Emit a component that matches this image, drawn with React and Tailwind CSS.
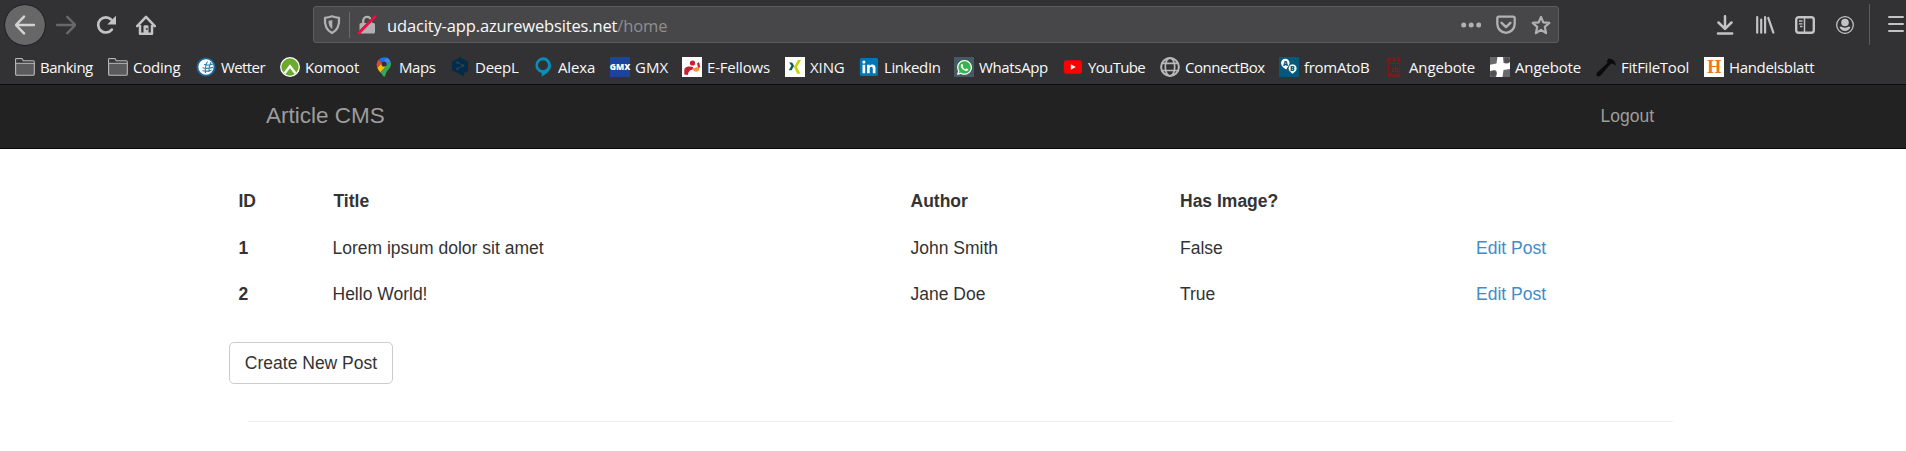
import { FaWhatsapp } from "react-icons/fa";

const Icon = ({ children, className = "h-5 w-5 shrink-0" }) => (
  <svg viewBox="0 0 20 20" className={className} fill="none">
    {children}
  </svg>
);

const Folder = () => (
  <Icon>
    <path d="M.6 17V2.3q0-.7.7-.7h5.3q.6 0 .9.7l.8 1.600h10q1 0 1 1V17q0 1.300-1.300 1.300H2Q.6 18.300.6 17z" fill="#5b5b5d" stroke="#b9b9ba" strokeWidth="1.100" />
    <path d="M1.200 2.200h5.300l1.200 2.300h11v1.500H1.200z" fill="#38383a" />
    <path d="M.6 6.300h18.800" stroke="#b9b9ba" strokeWidth="1" />
  </Icon>
);

const Wetter = () => (
  <Icon>
    <circle cx="10" cy="10" r="8.600" fill="#fff" stroke="#176a96" strokeWidth="1.900" />
    <path d="M8 7.500c3 .8 6 .6 9-.6M6.500 10.800c3 .8 7 .6 10.500-.4M6.500 13.800c3 .6 6 .4 9-.6M11.500 4.500c-2 3-2.500 7-2 11.500M15 5c-1.600 3-2.200 6.500-2 10" stroke="#2b7eac" strokeWidth="1.100" />
  </Icon>
);

const Komoot = () => (
  <Icon>
    <circle cx="10" cy="10" r="9.300" fill="#6aab2b" stroke="#fff" strokeWidth="1.300" />
    <path d="m4.600 16.200 5.400-6.900 5.400 6.900" stroke="#fff" strokeWidth="2.400" />
  </Icon>
);

const Maps = () => (
  <Icon>
    <path d="M4.500 2.800 8 5.700 3.400 11Q1.500 6.500 4.500 2.800z" fill="#ea4335" />
    <path d="M4.500 2.800Q7.500-.6 12.300.5L8 5.700z" fill="#1a73e8" />
    <path d="M12.300.5q3 .8 4.200 3.800L12.400 9 8 5.700z" fill="#4285f4" />
    <path d="M3.400 11 8 5.700l4.400 3.200L6.300 15.600Q4.400 13.300 3.400 11z" fill="#fbbc04" />
    <path d="M16.500 4.300c1.800 4.700-1.600 7.700-3.600 10.300-1.400 1.900-1.300 5.200-2.700 5.200-1.300 0-1.300-2-3.900-4.200z" fill="#34a853" />
    <circle cx="10.100" cy="7" r="2.600" fill="#323234" />
  </Icon>
);

const DeepL = () => (
  <Icon>
    <path d="m10 .2 8 4.500v9L14 16v3.800l-3.300-2.400L10 17.300l-8-4V4.700z" fill="#042b48" />
    <path d="m7.500 5.500 5.500 3-5.500 3.200" stroke="#28435a" strokeWidth="1" />
    <circle cx="7.500" cy="5.500" r="1.300" fill="#28435a" />
    <circle cx="13" cy="8.600" r="1.300" fill="#28435a" />
    <circle cx="7.500" cy="11.800" r="1.300" fill="#28435a" />
  </Icon>
);

const Alexa = () => (
  <Icon>
    <path fillRule="evenodd" d="M10 .3a8 8 0 0 1 8 8c0 5.500-4.500 8.500-9.300 11.500v-3.700A8 8 0 0 1 10 .3zm0 3a5 5 0 1 0 0 10 5 5 0 0 0 0-10z" fill="#068fb8" />
  </Icon>
);

const Gmx = () => (
  <span className="flex h-5 w-5 shrink-0 items-center justify-center bg-[#1c449b] font-['Open_Sans',sans-serif] text-[8.5px] leading-none font-extrabold tracking-[-0.1px] text-white">
    GMX
  </span>
);

const EFellows = () => (
  <Icon>
    <path d="M0 0h20v20H0z" fill="#fff" />
    <circle cx="10.500" cy="6" r="2.600" fill="#c81e32" />
    <path d="M2.300 17.500v-4c0-3 2.500-4 5.400-3.900l3.500.4-.5 2.500q-2.800 0-4 2.500l-1 3z" fill="#c81e32" />
    <path d="M15 6.500 17 5l1.300 5-2 1.500z" fill="#c81e32" />
    <path d="M10.500 10.700q1.500 1 3.200-.2t3.800.2q-.3 4-3.300 4t-3.700-4z" fill="#f6923a" />
  </Icon>
);

const Xing = () => (
  <Icon>
    <path d="M0 0h20v20H0z" fill="#fff" />
    <path d="M4.200 5.500h2.900l2 3.300-2.500 4.400H3.800l2.500-4.400z" fill="#0a5c61" />
    <path d="M13 3h3l-4 7 3.300 6.700h-3L8.900 10z" fill="#c6d400" />
  </Icon>
);

const LinkedIn = () => (
  <Icon>
    <rect x=".8" y="1" width="18.200" height="18" rx="1.500" fill="#0077b5" />
    <path d="M3.500 7.800h2.700v8.500H3.500zM8 7.800h2.600V9q1-1.500 2.900-1.400 3 0 3 3.600v5.100h-2.700v-4.600q0-1.900-1.500-1.900-1.600 0-1.600 2v4.500H8z" fill="#fff" />
    <circle cx="4.850" cy="5.100" r="1.600" fill="#fff" />
  </Icon>
);

const WhatsApp = () => (
  <span className="relative flex h-5 w-5 shrink-0 items-center justify-center bg-[#455a64]">
    <svg viewBox="0 0 20 20" className="absolute h-5 w-5">
      <path d="M10.300 3a7 7 0 1 1-3.200 13L3 17.200l1.200-4A7 7 0 0 1 10.300 3z" fill="#35b74b" />
    </svg>
    <FaWhatsapp className="relative h-[17px] w-[17px] text-white" />
  </span>
);

const YouTube = () => (
  <Icon>
    <rect x=".8" y="3.300" width="18.200" height="13.400" rx="3" fill="#f00" />
    <path d="m7.800 7.200 5 2.800-5 2.800z" fill="#fff" />
  </Icon>
);

const Globe = () => (
  <Icon>
    <g stroke="#b9b9ba" strokeWidth="1.700">
      <circle cx="10" cy="10" r="8.900" strokeWidth="2" />
      <ellipse cx="10" cy="10" rx="4.700" ry="8.900" />
      <path d="M2.500 6.300h15M2.500 13.500h15" />
    </g>
  </Icon>
);

const FromAtoB = () => (
  <span className="relative block h-5 w-5 shrink-0 bg-[#045878] font-['Open_Sans',sans-serif] text-[7px] leading-none font-extrabold text-[#045878]">
    <svg viewBox="0 0 20 20" className="absolute h-5 w-5">
      <path d="M6.300 1.800a4.300 4.300 0 0 1 4.300 4.300c0 2.800-2.300 4-3.300 6.300C4.500 11 2 9 2 6.100a4.300 4.300 0 0 1 4.300-4.300z" fill="#fff" />
      <path d="M13.600 7a4.500 4.500 0 0 1 4.400 4.500c0 2.600-2.300 4.200-4.800 5.700-1-2-4-3-4-5.700A4.500 4.500 0 0 1 13.600 7z" fill="#fff" stroke="#045878" strokeWidth=".8" />
    </svg>
    <span className="absolute top-[3px] left-[4px]">A</span>
    <span className="absolute top-[8px] left-[11px]">B</span>
  </span>
);

const Shop = () => (
  <span className="relative block h-5 w-5 shrink-0 font-['Liberation_Sans',sans-serif] text-[7px] leading-none text-[#961818]">
    <svg viewBox="0 0 20 20" className="absolute h-5 w-5" fill="none">
      <path d="M5 .5h2.500L6.600 4q-1.500 2-3 .8l-1-.8zM9 .5h2.300L12 4.300q-1.800 1.500-3.500 0zM13 .5h2l2.400 3.500-1 .8q-1.700 1.200-3-.8z" fill="#861717" />
      <path d="M4.500 6v12.500M15.600 6v12.500M4.500 6.500h11" stroke="#861717" strokeWidth="1" />
      <path d="M3.900 16.800h4.600l.5 1h2.300l.5-1h4.300v3H3.900z" fill="#861717" />
    </svg>
    <span className="absolute top-[9px] left-[7px]">cb</span>
  </span>
);

const Cross = () => (
  <Icon>
    <path d="M0 0h20v20H0z" fill="#fff" />
    <path d="M0 0h7.500l-1 6.500L0 7.800zM13 0h7v5q-2 1.800-4 1.500L13.500 6zM0 14l5-1q2 .5 2 3.500L6 20H0zM13.500 13l6.500-1v8h-7.500z" fill="#69696b" />
    <circle cx="3.300" cy="16.600" r="2.800" fill="#505052" />
    <circle cx="17" cy="3.300" r="2.800" fill="#505052" />
  </Icon>
);

const Hammer = () => (
  <Icon>
    <path d="M12 5.500 14 7.500 4.500 18.800q-2 1.300-3.700 0-.8-1.800.7-3.500z" fill="#0b0b0b" />
    <path d="m10.500 4.500 2-3 2 .3q4 .8 5.300 5.500l-.6 1.200q-2-2.600-4-2l-1.500 1.800z" fill="#0b0b0b" />
  </Icon>
);

const Handelsblatt = () => (
  <span className="flex h-5 w-5 shrink-0 items-center justify-center bg-white font-['Liberation_Serif',serif] text-[18px] leading-none font-bold text-[#ee7420]">
    H
  </span>
);

const bookmarks = [
  { label: "Banking", icon: Folder, box: "w-[93px] tracking-[-0.5px]" },
  { label: "Coding", icon: Folder, box: "w-[88px] tracking-[-0.25px]" },
  { label: "Wetter", icon: Wetter, box: "w-[84px] tracking-[-0.6px]" },
  { label: "Komoot", icon: Komoot, box: "w-[94px] tracking-[-0.25px]" },
  { label: "Maps", icon: Maps, box: "w-[76px] tracking-[-0.45px]" },
  { label: "DeepL", icon: DeepL, box: "w-[83px] tracking-[-0.25px]" },
  { label: "Alexa", icon: Alexa, box: "w-[77px] tracking-[-0.15px]" },
  { label: "GMX", icon: Gmx, box: "w-[72px] tracking-[0.1px]" },
  { label: "E-Fellows", icon: EFellows, box: "w-[103px] tracking-[-0.2px]" },
  { label: "XING", icon: Xing, box: "w-[74px] tracking-[-0.1px]" },
  { label: "LinkedIn", icon: LinkedIn, box: "w-[95px] tracking-[-0.4px]" },
  { label: "WhatsApp", icon: WhatsApp, box: "w-[109px] tracking-[-0.35px]" },
  { label: "YouTube", icon: YouTube, box: "w-[97px] tracking-[-0.65px]" },
  { label: "ConnectBox", icon: Globe, box: "w-[119px] tracking-[-0.48px]" },
  { label: "fromAtoB", icon: FromAtoB, box: "w-[105px] tracking-[-0.28px]" },
  { label: "Angebote", icon: Shop, box: "w-[106px] tracking-[-0.15px]" },
  { label: "Angebote", icon: Cross, box: "w-[106px] tracking-[-0.15px]" },
  { label: "FitFileTool", icon: Hammer, box: "w-[108px] tracking-[-0.25px]" },
  { label: "Handelsblatt", icon: Handelsblatt, box: "w-[112px] tracking-[-0.33px]" },
];

const posts = [
  { id: 1, title: "Lorem ipsum dolor sit amet", author: "John Smith", image: "False" },
  { id: 2, title: "Hello World!", author: "Jane Doe", image: "True" },
];

const Toolbar = () => (
  <div className="flex h-[49px] items-start pt-1 pl-[5px]">
    <div className="flex h-[41px] w-[308px] shrink-0 items-center">
      <div className="flex h-10 w-10 items-center justify-center rounded-full bg-[#676768] outline outline-[#232325]">
        <Icon>
          <path d="M1.300 10H19M9 1.600.9 10 9 18.400" stroke="#d3d3d4" strokeWidth="2.500" strokeLinecap="round" strokeLinejoin="round" />
        </Icon>
      </div>
      <Icon className="ml-[11px] h-5 w-5">
        <path d="M1 10h17.700M11.300 1.800 19.300 10l-8 8.200" stroke="#68686a" strokeWidth="2.400" strokeLinecap="round" strokeLinejoin="round" />
      </Icon>
      <Icon className="ml-5 h-5 w-5">
        <path d="M15.800 14.600A7.600 7.600 0 1 1 15.300 4.600" stroke="#c3c3c4" strokeWidth="2.700" strokeLinecap="round" />
        <path d="M20 .8v8.700h-8.700z" fill="#c3c3c4" />
      </Icon>
      <Icon className="ml-5 h-5 w-5">
        <path d="M1.200 11.200 10 1.800l8.800 9.400M4 10v8.700h12V10" stroke="#c3c3c4" strokeWidth="2.500" strokeLinecap="round" strokeLinejoin="round" />
        <path d="M7.500 19v-7.500q0-1.300 1.300-1.300h2.400q1.300 0 1.300 1.300V19z" fill="#c3c3c4" />
        <circle cx="10.800" cy="14" r=".9" fill="#323234" />
      </Icon>
    </div>
    <div className="mt-0.5 flex h-[37px] w-[1246px] shrink-0 items-center rounded-[3px] border border-[#5c5c5e] bg-[#474749] pl-2">
      <Icon>
        <path d="M10 1.300c2.500 1 4.500 1.400 7 1.500.6 6.500-1 12-7 15.300C4 14.800 2.400 9.300 3 2.800c2.500-.1 4.500-.5 7-1.500z" stroke="#b1b1b3" strokeWidth="2.300" strokeLinejoin="round" />
        <path d="M10.300 5v9.200C7.500 12.400 6.400 9.600 6.500 5.800q2-.1 3.800-.8z" fill="#b1b1b3" />
      </Icon>
      <div className="ml-[7px] h-[26px] w-px bg-[#69696b]" />
      <Icon className="ml-[7px] h-5 w-5">
        <path d="M6.200 9V5.700a3.900 3.900 0 0 1 7.800 0V9" stroke="#b1b1b3" strokeWidth="2.300" />
        <rect x="2.500" y="8" width="15.500" height="10.500" rx="1.500" fill="#b1b1b3" />
        <path d="M1.800 16.500 16.700 1.500" stroke="#474749" strokeWidth="1" />
        <path d="M2 18 18.200 1.700" stroke="#f50a40" strokeWidth="2.600" strokeLinecap="round" />
      </Icon>
      <div className="mt-[3px] ml-2.5 flex-1 text-[16.5px] leading-6 tracking-[-0.14px] text-[#f9f9fa]">
        udacity-app.azurewebsites.net<span className="text-[#8f8f91]">/home</span>
      </div>
      <div className="mr-[7px] flex items-center gap-[15px]">
        <Icon>
          <g fill="#b1b1b3">
            <circle cx="2.700" cy="10" r="2.500" />
            <circle cx="10.200" cy="10" r="2.500" />
            <circle cx="17.700" cy="10" r="2.500" />
          </g>
        </Icon>
        <Icon>
          <path d="M1.300 3.200q0-1.500 1.500-1.500h14.400q1.500 0 1.500 1.500v6q-.6 7.700-8.700 8.600-8.100-.9-8.700-8.600z" stroke="#b1b1b3" strokeWidth="2.300" />
          <path d="m5.600 7.800 4.400 4.300 4.400-4.300" stroke="#b1b1b3" strokeWidth="2.400" strokeLinecap="round" strokeLinejoin="round" />
        </Icon>
        <Icon>
          <path d="m10 1.900 2.300 5.500 6 .5-4.500 4 1.300 6.300L10 14.800l-5.100 3.400 1.300-6.300-4.500-4 6-.5z" stroke="#b1b1b3" strokeWidth="2.200" strokeLinejoin="round" />
        </Icon>
      </div>
    </div>
    <div className="ml-[156px] flex h-[41px] items-center text-[#c3c3c4]">
      <Icon>
        <path d="M10 1.200v12M3.500 7.500l6.500 6.400 6.500-6.400M3 18.600h14.200" stroke="currentColor" strokeWidth="2.500" strokeLinecap="round" strokeLinejoin="round" />
      </Icon>
      <Icon className="ml-5 h-5 w-5">
        <path d="M2.200 2v15.700M6.200 4.500v13.200M10.100 2.200v15.500" stroke="currentColor" strokeWidth="2.200" strokeLinecap="round" />
        <path d="m13.300 3 5 14.500" stroke="currentColor" strokeWidth="2.300" strokeLinecap="round" />
      </Icon>
      <Icon className="ml-5 h-5 w-5">
        <rect x="1.200" y="2.200" width="17.600" height="15.600" rx="2.500" stroke="currentColor" strokeWidth="2.400" />
        <path d="M9.500 2.500v15" stroke="currentColor" strokeWidth="1.500" />
        <path d="M4 6h3.500M4 8.800h3.500M5 11.500h2.500" stroke="currentColor" strokeWidth="1.300" />
      </Icon>
      <Icon className="ml-5 h-5 w-5">
        <circle cx="10" cy="10" r="8.300" stroke="currentColor" strokeWidth="1.300" />
        <circle cx="10" cy="7.500" r="3.800" fill="currentColor" />
        <path d="M4.500 12q1.800-.8 2.600 0 2.900 1.600 5.800 0 .8-.8 2.600 0-1.700 4-5.500 4T4.500 12z" fill="currentColor" />
      </Icon>
    </div>
    <div className="ml-3.5 h-[41px] w-px bg-[#5c5c5e]" />
    <div className="ml-[18px] flex h-[40px] w-4 flex-col items-center justify-center gap-[4.5px]">
      <div className="h-[2.5px] w-4 rounded bg-[#c3c3c4]" />
      <div className="h-[2.5px] w-4 rounded bg-[#c3c3c4]" />
      <div className="h-[2.5px] w-4 rounded bg-[#c3c3c4]" />
    </div>
  </div>
);

const columns = "grid grid-cols-[94px_578px_269.5px_296px_1fr] pl-[238.5px]";

export default function App() {
  return (
    <div className="h-[451px] overflow-hidden bg-white font-['Liberation_Sans',Arial,sans-serif] text-[17.5px] leading-[25px] text-[#333]">
      <header className="h-[85px] overflow-hidden border-b border-[#0c0c0d] bg-[#323234] font-['Open_Sans',sans-serif]">
        <Toolbar />
        <nav className="flex h-[35px] items-center pt-px pl-[15px] text-[15px] leading-5 text-[#f9f9fa]">
          {bookmarks.map(({ label, icon: Glyph, box }, i) => (
            <a key={i} className={"flex shrink-0 items-center gap-[5px] whitespace-nowrap " + box}>
              <Glyph />
              {label}
            </a>
          ))}
        </nav>
      </header>
      <nav className="flex h-16 items-center justify-between border-b border-[#080808] bg-[#222] pr-[252px] pl-[266px] text-[#9d9d9d]">
        <a className="pb-0.5 text-[22.5px]">Article CMS</a>
        <a>Logout</a>
      </nav>
      <main>
        <div className={columns + " h-[47px] pt-[39.5px] font-bold"}>
          <span>ID</span>
          <span className="pl-px">Title</span>
          <span>Author</span>
          <span>Has Image?</span>
        </div>
        <div className="pt-[39.5px]">
          {posts.map((p) => (
            <div key={p.id} className={columns + " h-[46.5px]"}>
              <span className="font-bold">{p.id}</span>
              <span>{p.title}</span>
              <span>{p.author}</span>
              <span>{p.image}</span>
              <a className="text-[#428bca]">Edit Post</a>
            </div>
          ))}
        </div>
        <button className="mt-[13px] ml-[229px] flex h-[42px] w-[164px] items-center justify-center rounded-[5px] border border-[#ccc] bg-white pt-0.5">
          Create New Post
        </button>
        <hr className="mt-[37px] ml-[248px] w-[1425px] border-[#eee]" />
      </main>
    </div>
  );
}
